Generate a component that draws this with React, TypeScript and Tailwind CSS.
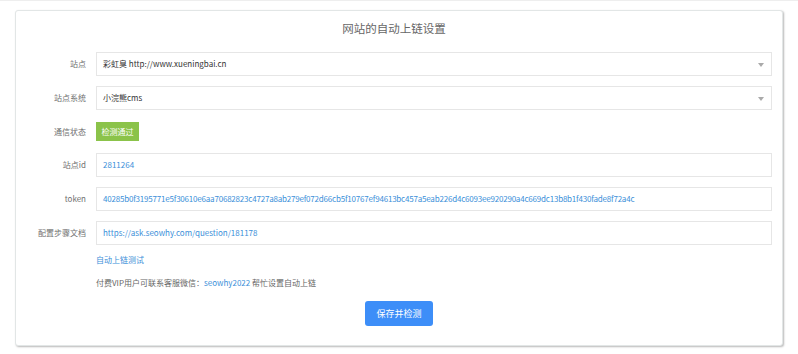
import React from "react";

const font = { fontFamily: '"Noto Sans CJK SC", "Open Sans", sans-serif' };

const Field = ({ label, children }: { label: string; children: React.ReactNode }) => (
  <div className="flex items-center h-[24px]">
    <div className="w-[70px] text-right text-[8px] text-[#707070]">{label}</div>
    <div className="ml-[10px] flex-1 h-full">{children}</div>
  </div>
);

const Box = ({ value, blue, select, tight }: { value: string; blue?: boolean; select?: boolean; tight?: boolean }) => (
  <div className="relative h-full border border-[#e6e6e6] bg-white flex items-center pl-[6px]">
    <span
      className={`text-[8px] whitespace-nowrap ${blue ? "text-[#3b8fd9]" : "text-[#333]"} ${tight ? "tracking-[-0.2px]" : ""}`}
    >
      {value}
    </span>
    {select && (
      <span className="absolute right-[7px] top-[10px] w-0 h-0 border-l-[3.5px] border-r-[3.5px] border-t-[4px] border-l-transparent border-r-transparent border-t-[#aaa]" />
    )}
  </div>
);

export default function App() {
  return (
    <div className="w-[798px] h-[354px] bg-white border-t border-[#eee] pt-[9px] px-[15px]" style={font}>
      <div className="h-[336px] border border-[#e2e6e6] rounded-[3px] bg-white shadow-[1px_1px_2px_rgba(0,0,0,0.28)] pr-[10px]">
        <h1 className="text-center text-[11.5px] text-[#666] leading-none pt-[12px] h-[41px]">网站的自动上链设置</h1>
        <div className="flex flex-col">
          <Field label="站点">
            <Box value="彩虹臭 http://www.xueningbai.cn" select />
          </Field>
          <div className="h-[10px]" />
          <Field label="站点系统">
            <Box value="小浣熊cms" select />
          </Field>
          <div className="h-[10px]" />
          <div className="flex items-center h-[23px]">
            <div className="w-[70px] text-right text-[8px] text-[#707070]">通信状态</div>
            <div className="ml-[10px] h-[19px] w-[43px] bg-[#8bc34a] text-white text-[8px] flex items-center justify-center">检测通过</div>
          </div>
          <div className="h-[10px]" />
          <Field label="站点id">
            <Box value="2811264" blue />
          </Field>
          <div className="h-[10px]" />
          <Field label="token">
            <Box
              value="40285b0f3195771e5f30610e6aa70682823c4727a8ab279ef072d66cb5f10767ef94613bc457a5eab226d4c6093ee920290a4c669dc13b8b1f430fade8f72a4c"
              blue
              tight
            />
          </Field>
          <div className="h-[10px]" />
          <Field label="配置步骤文档">
            <Box value="https://ask.seowhy.com/question/181178" blue />
          </Field>
          <div className="pl-[80px] mt-[9px] text-[8px] leading-[12px] text-[#3b8fd9]">自动上链测试</div>
          <div className="pl-[80px] mt-[11px] text-[8px] leading-[12px] text-[#666]">
            付费VIP用户可联系客服微信：<span className="text-[#3b8fd9]">seowhy2022</span> 帮忙设置自动上链
          </div>
          <div className="flex justify-center mt-[12px] pl-[10px]">
            <button className="w-[68px] h-[25px] rounded-[3px] bg-[#3d8ef8] text-white text-[9px]">保存并检测</button>
          </div>
        </div>
      </div>
    </div>
  );
}
